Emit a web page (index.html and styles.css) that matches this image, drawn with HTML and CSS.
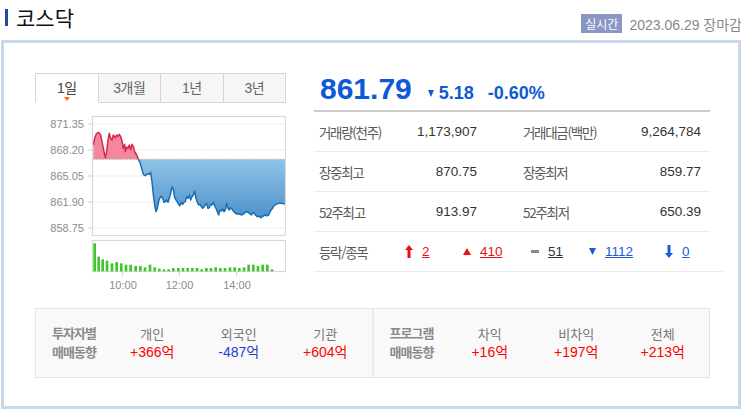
FILE: index.html
```html
<!DOCTYPE html>
<html lang="ko">
<head>
  <meta charset="UTF-8">
  <meta name="viewport" content="width=device-width, initial-scale=1.0">
  <title>코스닥</title>
  <link rel="stylesheet" href="styles.css">
</head>
<body>

  <header class="head">
    <h1 class="title">코스닥</h1>
    <div class="stamp"><span class="badge">실시간</span><span>2023.06.29 장마감</span></div>
  </header>

  <section class="box">
    <div class="main">
      <!-- chart -->
      <div class="chart-col">
        <ul class="tabs">
          <li class="on">1일</li>
          <li>3개월</li>
          <li>1년</li>
          <li>3년</li>
        </ul>
        <svg class="chart" width="251" height="190" viewBox="35 103 251 190">
          <defs>
            <linearGradient id="blueFill" gradientUnits="userSpaceOnUse" x1="0" y1="133" x2="0" y2="310">
              <stop offset="0" stop-color="#8fc4e8"/>
              <stop offset="1" stop-color="#4d92cb"/>
            </linearGradient>
            <clipPath id="above" clipPathUnits="userSpaceOnUse"><rect x="0" y="0" width="600" height="133"/></clipPath>
            <clipPath id="below" clipPathUnits="userSpaceOnUse"><rect x="0" y="133" width="600" height="300"/></clipPath>
          </defs>

          <g class="grid">
            <line x1="92" y1="124" x2="285" y2="124"/>
            <line x1="92" y1="150" x2="285" y2="150"/>
            <line x1="92" y1="176" x2="285" y2="176"/>
            <line x1="92" y1="202" x2="285" y2="202"/>
            <line x1="92" y1="228" x2="285" y2="228"/>
          </g>
          <g class="ticks">
            <line x1="88" y1="124" x2="92" y2="124"/>
            <line x1="88" y1="150" x2="92" y2="150"/>
            <line x1="88" y1="176" x2="92" y2="176"/>
            <line x1="88" y1="202" x2="92" y2="202"/>
            <line x1="88" y1="228" x2="92" y2="228"/>
            <line x1="122.7" y1="272" x2="122.7" y2="276"/>
            <line x1="179.3" y1="272" x2="179.3" y2="276"/>
            <line x1="236.7" y1="272" x2="236.7" y2="276"/>
          </g>
          <g class="axis">
            <text x="84" y="128">871.35</text>
            <text x="84" y="154">868.20</text>
            <text x="84" y="180">865.05</text>
            <text x="84" y="206">861.90</text>
            <text x="84" y="232">858.75</text>
          </g>
          <g class="axis time">
            <text x="123" y="289">10:00</text>
            <text x="179.5" y="289">12:00</text>
            <text x="237" y="289">14:00</text>
          </g>

          <g transform="translate(90,115) scale(0.33333)">
            <path clip-path="url(#above)" fill="#f4869d"
              d="M10,133 L10,90 14,70 20,55 26,52 32,60 36,80 42,110 46,128 50,110 54,75 58,55 62,70 66,75 70,60 76,68 80,60 84,64 88,58 92,65 96,78 100,100 104,88 106,110 110,96 114,100 118,90 122,104 126,88 130,95 134,110 140,120 145,133 L585,133 Z"/>
            <path clip-path="url(#below)" fill="url(#blueFill)"
              d="M145,133 L150,142 155,160 160,178 166,182 172,176 178,178 182,172 186,200 190,240 194,270 198,290 202,280 206,258 210,248 214,244 218,250 222,262 226,260 230,255 234,262 238,250 242,235 246,216 250,222 254,248 258,255 262,260 266,268 270,272 274,262 278,268 282,262 286,260 290,245 294,250 298,240 302,255 306,245 310,240 314,228 318,250 322,262 326,270 330,268 334,275 338,280 342,275 346,270 350,265 354,280 358,278 362,268 366,270 370,262 374,272 378,280 382,290 386,300 390,285 394,288 398,282 402,290 406,285 410,265 414,280 418,285 422,278 426,282 430,288 436,295 442,297 448,296 454,300 460,297 466,292 472,290 478,295 484,300 490,292 496,300 502,305 508,303 512,308 518,305 524,300 530,302 536,300 540,290 546,282 552,272 558,268 566,265 574,265 580,266 585,266 L585,133 Z"/>
            <line class="base" x1="10" y1="133" x2="585" y2="133"/>
            <path class="line-up" clip-path="url(#above)"
              d="M10,90 L14,70 20,55 26,52 32,60 36,80 42,110 46,128 50,110 54,75 58,55 62,70 66,75 70,60 76,68 80,60 84,64 88,58 92,65 96,78 100,100 104,88 106,110 110,96 114,100 118,90 122,104 126,88 130,95 134,110 140,120 145,133 150,142"/>
            <path class="line-down" clip-path="url(#below)"
              d="M140,120 L145,133 150,142 155,160 160,178 166,182 172,176 178,178 182,172 186,200 190,240 194,270 198,290 202,280 206,258 210,248 214,244 218,250 222,262 226,260 230,255 234,262 238,250 242,235 246,216 250,222 254,248 258,255 262,260 266,268 270,272 274,262 278,268 282,262 286,260 290,245 294,250 298,240 302,255 306,245 310,240 314,228 318,250 322,262 326,270 330,268 334,275 338,280 342,275 346,270 350,265 354,280 358,278 362,268 366,270 370,262 374,272 378,280 382,290 386,300 390,285 394,288 398,282 402,290 406,285 410,265 414,280 418,285 422,278 426,282 430,288 436,295 442,297 448,296 454,300 460,297 466,292 472,290 478,295 484,300 490,292 496,300 502,305 508,303 512,308 518,305 524,300 530,302 536,300 540,290 546,282 552,272 558,268 566,265 574,265 580,266 585,266"/>
          </g>

          <rect class="frame" x="92.5" y="116.5" width="193" height="119"/>
          <rect class="frame" x="92.5" y="240.5" width="193" height="31"/>

          <!-- volume bars -->
          <g class="vol" transform="translate(90,236) scale(0.33333)">
            <rect x="10" y="22" width="8" height="84"/>
            <rect x="22" y="62" width="8" height="44"/>
            <rect x="34" y="70" width="8" height="36"/>
            <rect x="47" y="74" width="8" height="32"/>
            <rect x="62" y="82" width="8" height="24"/>
            <rect x="76" y="78" width="8" height="28"/>
            <rect x="90" y="82" width="8" height="24"/>
            <rect x="104" y="86" width="8" height="20"/>
            <rect x="118" y="86" width="8" height="20"/>
            <rect x="133" y="90" width="8" height="16"/>
            <rect x="147" y="90" width="8" height="16"/>
            <rect x="161" y="94" width="8" height="12"/>
            <rect x="176" y="86" width="8" height="20"/>
            <rect x="190" y="94" width="8" height="12"/>
            <rect x="204" y="98" width="8" height="8"/>
            <rect x="218" y="100" width="8" height="6"/>
            <rect x="232" y="100" width="8" height="6"/>
            <rect x="246" y="96" width="8" height="10"/>
            <rect x="261" y="96" width="8" height="10"/>
            <rect x="275" y="96" width="8" height="10"/>
            <rect x="289" y="96" width="8" height="10"/>
            <rect x="303" y="96" width="8" height="10"/>
            <rect x="317" y="96" width="8" height="10"/>
            <rect x="331" y="100" width="8" height="6"/>
            <rect x="345" y="96" width="8" height="10"/>
            <rect x="359" y="96" width="8" height="10"/>
            <rect x="373" y="94" width="8" height="12"/>
            <rect x="387" y="96" width="8" height="10"/>
            <rect x="401" y="96" width="8" height="10"/>
            <rect x="416" y="94" width="8" height="12"/>
            <rect x="430" y="94" width="8" height="12"/>
            <rect x="444" y="96" width="8" height="10"/>
            <rect x="458" y="94" width="8" height="12"/>
            <rect x="472" y="86" width="8" height="20"/>
            <rect x="486" y="86" width="8" height="20"/>
            <rect x="500" y="90" width="8" height="16"/>
            <rect x="514" y="86" width="8" height="20"/>
            <rect x="528" y="86" width="8" height="20"/>
            <rect x="542" y="100" width="8" height="6"/>
          </g>
        </svg>
      </div>

      <!-- quote -->
      <div class="info-col">
        <div class="price">
          <strong class="now">861.79</strong>
          <span class="change"><i class="tri"></i>5.18</span>
          <span class="rate">-0.60%</span>
        </div>
        <div class="row">
          <div class="cell"><span class="label">거래량(천주)</span><span class="value">1,173,907</span></div>
          <div class="cell"><span class="label">거래대금(백만)</span><span class="value">9,264,784</span></div>
        </div>
        <div class="row">
          <div class="cell"><span class="label">장중최고</span><span class="value">870.75</span></div>
          <div class="cell"><span class="label">장중최저</span><span class="value">859.77</span></div>
        </div>
        <div class="row">
          <div class="cell"><span class="label">52주최고</span><span class="value">913.97</span></div>
          <div class="cell"><span class="label">52주최저</span><span class="value">650.39</span></div>
        </div>
        <div class="row updown">
          <span class="label">등락/종목</span>
          <span class="ud red">
            <svg width="8" height="13" viewBox="0 0 8 13"><path d="M4 0 L8 5 L5.5 5 L5.5 13 L2.5 13 L2.5 5 L0 5 Z"/></svg>
            <a href="#">2</a>
          </span>
          <span class="ud red">
            <svg width="8" height="7" viewBox="0 0 8 7"><path d="M4 0 L8 7 L0 7 Z"/></svg>
            <a href="#">410</a>
          </span>
          <span class="ud gray">
            <svg width="8" height="3" viewBox="0 0 8 3"><rect width="8" height="3"/></svg>
            <a href="#">51</a>
          </span>
          <span class="ud blue">
            <svg width="7" height="7" viewBox="0 0 7 7"><path d="M0 0 L7 0 L3.5 7 Z"/></svg>
            <a href="#">1112</a>
          </span>
          <span class="ud blue">
            <svg width="8" height="13" viewBox="0 0 8 13"><path d="M2.5 0 L5.5 0 L5.5 8 L8 8 L4 13 L0 8 L2.5 8 Z"/></svg>
            <a href="#">0</a>
          </span>
        </div>
      </div>
    </div>

    <!-- investor trend -->
    <div class="trend">
      <div class="group">
        <div class="group-title">투자자별<br>매매동향</div>
        <div class="flow"><div class="flow-name">개인</div><div class="flow-val up">+366억</div></div>
        <div class="flow"><div class="flow-name">외국인</div><div class="flow-val down">-487억</div></div>
        <div class="flow"><div class="flow-name">기관</div><div class="flow-val up">+604억</div></div>
      </div>
      <div class="group">
        <div class="group-title">프로그램<br>매매동향</div>
        <div class="flow"><div class="flow-name">차익</div><div class="flow-val up">+16억</div></div>
        <div class="flow"><div class="flow-name">비차익</div><div class="flow-val up">+197억</div></div>
        <div class="flow"><div class="flow-name">전체</div><div class="flow-val up">+213억</div></div>
      </div>
    </div>
  </section>

</body>
</html>
```

FILE: styles.css
```css
:root {
  --blue: #0e5ad6;
  --red: #f00;
  --line: #ececec;
  --label: #5a5a5a;
}
* {
  box-sizing: border-box;
}
body {
  margin: 0;
  width: 741px;
  overflow: hidden;
  font-family: 'Liberation Sans', 'Noto Sans CJK KR', sans-serif;
  color: #333;
  background: #fff;
}
.head {
  display: flex;
  justify-content: space-between;
  height: 40px;
  margin-right: -1px;
}
.title {
  margin: 0;
  display: flex;
  align-items: center;
  gap: 8px;
  padding: 7px 0 0 5px;
  height: 27px;
  font-family: 'Noto Sans CJK KR', sans-serif;
  font-size: 21px;
  font-weight: normal;
  line-height: 20px;
  color: #111;
}
.title::before {
  content: '';
  width: 3px;
  height: 17px;
  background: #24489a;
}
.stamp {
  display: flex;
  align-items: center;
  gap: 7px;
  padding-top: 14px;
  height: 33px;
  font-size: 14px;
  color: #888;
  white-space: nowrap;
}
.badge {
  padding: 0 4px;
  background: #8a96c3;
  color: #fff;
  font-family: 'Noto Sans CJK KR', sans-serif;
  font-size: 12px;
  line-height: 19px;
}
.box {
  margin-left: 1px;
  width: 740px;
  height: 369px;
  border: 3px solid #c8d7ec;
  padding: 30px 0 0 31px;
}
.main {
  display: flex;
}
.chart-col {
  width: 251px;
}
.tabs {
  display: flex;
  margin: 0;
  padding: 0;
  list-style: none;
}
.tabs li {
  position: relative;
  flex: 1;
  height: 30px;
  border: 1px solid #d6d6d6;
  border-left: none;
  background: #f6f6f6;
  text-align: center;
  font-size: 14px;
  line-height: 28px;
  color: #666;
  letter-spacing: -0.5px;
}
.tabs li:first-child {
  border-left: 1px solid #d6d6d6;
}
.tabs li.on {
  background: #fff;
  border-bottom-color: #fff;
  color: #444;
}
.tabs li.on::after {
  content: '';
  position: absolute;
  left: 50%;
  bottom: 1px;
  margin-left: -3px;
  border-left: 3px solid transparent;
  border-right: 3px solid transparent;
  border-top: 4px solid #ff6a13;
}
.chart {
  display: block;
}
.grid line {
  stroke: #eeeeee;
  stroke-width: 1;
}
.ticks line {
  stroke: #cfcfcf;
  stroke-width: 1;
}
.frame {
  fill: none;
  stroke: #d9d9d9;
  stroke-width: 1.2;
}
.axis text {
  font-family: 'Liberation Sans', sans-serif;
  font-size: 11px;
  fill: #8c8c8c;
  text-anchor: end;
}
.axis.time text {
  text-anchor: middle;
}
.base {
  stroke: #b5b5b5;
  stroke-width: 3;
  stroke-dasharray: 6 3;
}
.line-up,
.line-down {
  fill: none;
  stroke-width: 4.5;
  stroke-linejoin: round;
}
.line-up {
  stroke: #d7284a;
}
.line-down {
  stroke: #1b6db0;
}
.vol rect {
  fill: #3fc62b;
}
.info-col {
  width: 409px;
  margin-left: 28px;
}
.price {
  display: flex;
  align-items: baseline;
  height: 39px;
  margin-right: 13px;
  padding: 1px 0 0 6px;
  border-bottom: 2px solid #cccccc;
  color: var(--blue);
  font-weight: bold;
}
.now {
  font-size: 30px;
  line-height: 30px;
}
.change {
  margin-left: 16px;
  font-size: 18px;
}
.tri {
  display: inline-block;
  margin-right: 5px;
  vertical-align: 2px;
  border-left: 3.5px solid transparent;
  border-right: 3.5px solid transparent;
  border-top: 7px solid var(--blue);
}
.rate {
  margin-left: 14px;
  font-size: 18px;
}
.row {
  display: grid;
  grid-template-columns: 158px 178px;
  column-gap: 46px;
  align-items: center;
  height: 40px;
  margin-right: 13px;
  padding-left: 5px;
  border-bottom: 1px solid var(--line);
}
.cell {
  display: flex;
  justify-content: space-between;
  align-items: center;
}
.label {
  font-family: 'Noto Sans CJK KR', sans-serif;
  font-size: 13.5px;
  letter-spacing: -1.3px;
  color: var(--label);
}
.value {
  font-size: 13.5px;
  color: #333;
}
.row.updown {
  grid-template-columns: 86px 58px 68px 58px 76px auto;
  column-gap: 0;
  margin-right: 0;
}
.ud {
  display: flex;
  align-items: center;
  font-size: 13.5px;
}
.ud svg {
  margin-right: 9px;
  fill: currentColor;
}
.ud a {
  color: inherit;
}
.red {
  color: #e81010;
}
.gray {
  color: #333;
}
.gray svg {
  fill: #888;
}
.blue {
  color: #1b5ad8;
}
.trend {
  display: flex;
  width: 675px;
  height: 70px;
  margin-top: 15px;
  border: 1px solid #e5e5e5;
  background: #f9f9f9;
}
.group {
  flex: 1;
  display: grid;
  grid-template-columns: 73px repeat(3, 86.5px);
  padding-top: 15px;
}
.group + .group {
  border-left: 2px solid var(--line);
}
.group-title {
  padding-left: 16px;
  font-family: 'Noto Sans CJK KR', sans-serif;
  font-size: 13px;
  font-weight: bold;
  line-height: 18.5px;
  letter-spacing: -1px;
  color: #8a8a8a;
}
.flow {
  text-align: center;
  line-height: 19px;
}
.flow-name {
  font-family: 'Noto Sans CJK KR', sans-serif;
  font-size: 13px;
  color: #777;
}
.flow-val {
  font-size: 14px;
}
.up {
  color: var(--red);
}
.down {
  color: #1c3fd8;
}
```
